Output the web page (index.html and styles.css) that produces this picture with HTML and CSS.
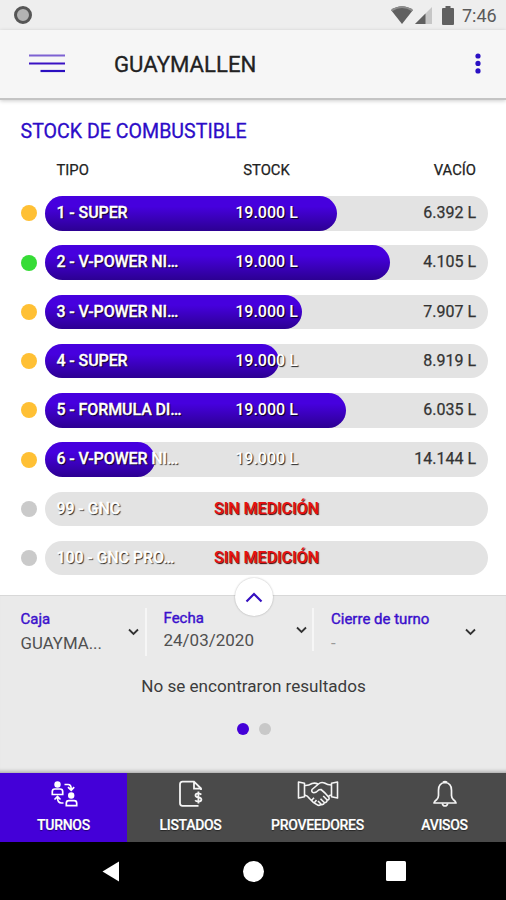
FILE: index.html
```
<!DOCTYPE html>
<html lang="es">
<head>
  <meta charset="UTF-8">
  <title>Stock de combustible</title>
  <meta name="viewport" content="width=device-width, initial-scale=1">
  <link rel="stylesheet" href="styles.css">
</head>
<body>
  <div class="status-bar">
    <span class="recorder"></span>
    <div class="status-icons">
      <svg class="wifi" width="22" height="18" viewBox="0 0 22 18"><path d="M0 4Q11-3.500 22 4L11 18Z" fill="#606060"/><path d="M0 4Q11-3.500 22 4L21 5.300Q11-1.500 1 5.300Z" fill="#8d8d8d"/></svg>
      <svg class="signal" width="17" height="17" viewBox="0 0 17 17"><path d="M17 0V17H0Z" fill="#c6c6c6"/><path d="M10.500 6.500V17H0Z" fill="#606060"/></svg>
      <svg class="battery" width="12" height="19" viewBox="0 0 12 19"><path d="M3.500 0h5v2H11a1 1 0 0 1 1 1v15a1 1 0 0 1-1 1H1a1 1 0 0 1-1-1V3a1 1 0 0 1 1-1h2.500z" fill="#606060"/></svg>
      <span class="clock">7:46</span>
    </div>
  </div>

  <header class="header">
    <svg class="menu" width="36" height="19" viewBox="0 0 36 19">
      <path d="M0 1.500h36" stroke="#7d61d2" stroke-width="2.200"/>
      <path d="M0 9.500h36" stroke="#3a12c4" stroke-width="2.200"/>
      <path d="M11.500 17h24.500" stroke="#2a0fc0" stroke-width="2.200"/>
    </svg>
    <h1>GUAYMALLEN</h1>
    <svg class="more" width="6" height="21" viewBox="0 0 6 21" fill="#2a10c4"><circle cx="3" cy="3" r="2.600"/><circle cx="3" cy="10.400" r="2.600"/><circle cx="3" cy="17.900" r="2.600"/></svg>
  </header>

  <main class="stock">
    <h2>STOCK DE COMBUSTIBLE</h2>
    <div class="cols table-head">
      <span class="tipo">TIPO</span><span class="cantidad">STOCK</span><span class="vacio">VACÍO</span>
    </div>

    <div class="tank">
      <span class="dot warn"></span>
      <div class="bar">
        <div class="fill" style="width: 292.5px"></div>
        <div class="cols"><span class="tipo">1 - SUPER</span><span class="cantidad">19.000 L</span><span class="vacio">6.392 L</span></div>
      </div>
    </div>
    <div class="tank">
      <span class="dot ok"></span>
      <div class="bar">
        <div class="fill" style="width: 345.5px"></div>
        <div class="cols"><span class="tipo">2 - V-POWER NI…</span><span class="cantidad">19.000 L</span><span class="vacio">4.105 L</span></div>
      </div>
    </div>
    <div class="tank">
      <span class="dot warn"></span>
      <div class="bar">
        <div class="fill" style="width: 257px"></div>
        <div class="cols"><span class="tipo">3 - V-POWER NI…</span><span class="cantidad">19.000 L</span><span class="vacio">7.907 L</span></div>
      </div>
    </div>
    <div class="tank">
      <span class="dot warn"></span>
      <div class="bar">
        <div class="fill" style="width: 234.5px"></div>
        <div class="cols"><span class="tipo">4 - SUPER</span><span class="cantidad">19.000 L</span><span class="vacio">8.919 L</span></div>
      </div>
    </div>
    <div class="tank">
      <span class="dot warn"></span>
      <div class="bar">
        <div class="fill" style="width: 301.5px"></div>
        <div class="cols"><span class="tipo">5 - FORMULA DI…</span><span class="cantidad">19.000 L</span><span class="vacio">6.035 L</span></div>
      </div>
    </div>
    <div class="tank">
      <span class="dot warn"></span>
      <div class="bar">
        <div class="fill" style="width: 110.5px"></div>
        <div class="cols"><span class="tipo">6 - V-POWER NI…</span><span class="cantidad">19.000 L</span><span class="vacio">14.144 L</span></div>
      </div>
    </div>
    <div class="tank">
      <span class="dot"></span>
      <div class="bar">
        <div class="cols"><span class="tipo">99 - GNC</span><span class="cantidad error">SIN MEDICIÓN</span></div>
      </div>
    </div>
    <div class="tank">
      <span class="dot"></span>
      <div class="bar">
        <div class="cols"><span class="tipo">100 - GNC PRO…</span><span class="cantidad error">SIN MEDICIÓN</span></div>
      </div>
    </div>
  </main>

  <section class="panel">
    <div class="toggle">
      <svg width="18" height="11" viewBox="0 0 18 11"><path d="M1.500 9.500L9 2l7.500 7.500" fill="none" stroke="#3510c0" stroke-width="2.200"/></svg>
    </div>
    <div class="filters">
      <div class="filter caja">
        <div><label>Caja</label><p>GUAYMA...</p></div>
        <svg class="chevron" width="11" height="8" viewBox="0 0 11 8"><path d="M1 1.500l4.500 4.500L10 1.500"/></svg>
      </div>
      <div class="filter fecha">
        <div><label>Fecha</label><p>24/03/2020</p></div>
        <svg class="chevron" width="11" height="8" viewBox="0 0 11 8"><path d="M1 1.500l4.500 4.500L10 1.500"/></svg>
      </div>
      <div class="filter cierre">
        <div><label>Cierre de turno</label><p class="empty">-</p></div>
        <svg class="chevron" width="11" height="8" viewBox="0 0 11 8"><path d="M1 1.500l4.500 4.500L10 1.500"/></svg>
      </div>
    </div>
    <p class="no-results">No se encontraron resultados</p>
    <div class="pager"><span class="active"></span><span></span></div>
  </section>

  <nav class="tabs">
    <div class="tab selected">
      <svg width="28" height="28" viewBox="0 0 28 28" fill="none" stroke="#fff" stroke-width="1.700">
        <circle cx="7.500" cy="4.500" r="3.200" fill="#fff" stroke="none"/>
        <path d="M2.300 14.500v-3q0-2.500 2.500-2.500h5.400q2.500 0 2.500 2.500v3z"/>
        <circle cx="21.200" cy="15.500" r="3.200" fill="#fff" stroke="none"/>
        <path d="M16.300 25.700v-2.500q0-2.500 2.500-2.500h5.400q2.500 0 2.500 2.500v2.500z"/>
        <path d="M14.500 4.500h3.500q3.200 0 3.200 4.500M18 7.200l3.200 3 3-3M13.500 23h-2q-4 0-4-5.500M4.500 19.500l3-3 3 3"/>
      </svg>
      <span>TURNOS</span>
    </div>
    <div class="tab">
      <svg width="28" height="28" viewBox="0 0 28 28" fill="none" stroke="#f4f4f4" stroke-width="1.800">
        <path d="M21.500 25.800H5.500q-2.500 0-2.500-2.500V4.200q0-2.500 2.500-2.500H17l7 6.800v1.500M17 1.700v7h7"/>
        <path d="M24.300 14.600q-1-1.300-3.100-1.300-2.700 0-2.700 2 0 1.800 2.900 2.100 3 .300 3 2.200 0 2-3 2-2.300 0-3.200-1.400M21.400 11.500v12"/>
      </svg>
      <span>LISTADOS</span>
    </div>
    <div class="tab">
      <svg width="42" height="28" viewBox="0 0 42 28" fill="none" stroke="#f4f4f4" stroke-width="1.600" stroke-linejoin="round">
        <path d="M1.500 2l6 1.200v13.500l-6 1.300zM40.500 2l-6 1.200v13.500l6 1.300z"/>
        <path d="M7.500 5.500q4 .300 7.500-2 3-1 6 .500M34.500 5q-4 0-7-2-3.500-1.300-6 1L15 9.500q-1 2.800 1.800 3.200 2.700-.200 5.200-2.900l2-.3q4.500 3.500 7.800 7.700 1.200 2.500-1.600 3M7.500 15q3 .500 5 3.500 4 5 8.500 6.800 2 .500 3.200-1L21 21M24.200 24.500q2.500.500 3.300-1.800l-4-4M27.500 22.700q2.500 0 2.700-2.700l-4-4M31.500 16.500q1-1.500 3-1.500M14.500 20.500l2.500-2.800M17.200 23l2.300-3"/>
      </svg>
      <span>PROVEEDORES</span>
    </div>
    <div class="tab">
      <svg width="28" height="28" viewBox="0 0 28 28" fill="none" stroke="#f4f4f4" stroke-width="1.700" stroke-linejoin="round">
        <path d="M14 2.500q-6.500.500-6.500 7.700v5.300q0 2.500-2 4.300-2 1.500-2.500 3.200h22q-.500-1.700-2.500-3.200-2-1.800-2-4.300v-5.300Q20.500 3 14 2.500z"/>
        <path d="M12 2.300q2-1.500 4 0M11.300 23.300q.500 2.700 2.700 2.700t2.700-2.700"/>
      </svg>
      <span>AVISOS</span>
    </div>
  </nav>

  <div class="android-nav">
    <svg width="18" height="21" viewBox="0 0 18 21"><path d="M17 .500v20L.500 10.500z" fill="#fff"/></svg>
    <svg width="21" height="21" viewBox="0 0 21 21"><circle cx="10.500" cy="10.500" r="10.500" fill="#fff"/></svg>
    <svg width="20" height="20" viewBox="0 0 20 20"><rect width="20" height="20" rx="1.500" fill="#fff"/></svg>
  </div>
</body>
</html>
```
FILE: styles.css
```
:root {
  --primary: #4400d8;
  --primary-dark: #2c0092;
  --track: #e3e3e3;
  --panel: #eaeaea;
}
* {
  box-sizing: border-box;
}
body {
  margin: 0;
  width: 506px;
  height: 900px;
  display: flex;
  flex-direction: column;
  overflow: hidden;
  background: #fff;
  font-family: Roboto, Arial, sans-serif;
  color: #222;
}
h1, h2, p {
  margin: 0;
  font-weight: 400;
}
svg {
  display: block;
  flex: none;
}

/* top */
.status-bar {
  height: 30px;
  flex: none;
  display: flex;
  justify-content: space-between;
  align-items: center;
  padding: 0 9px 0 14px;
  background: #eee;
}
.recorder {
  width: 18px;
  height: 18px;
  border: 3px solid #565656;
  border-radius: 50%;
  background: #b4b4b4;
}
.status-icons {
  display: flex;
  align-items: center;
}
.signal {
  margin: 1px 10px 0 2px;
}
.clock {
  width: 35px;
  margin: 2px 0 0 8px;
  font-size: 18px;
  line-height: 20px;
  color: #5a5a5a;
  white-space: nowrap;
}
.header {
  height: 70px;
  flex: none;
  display: flex;
  align-items: center;
  padding: 0 25px 2px 29px;
  background: #f6f6f6;
  border-bottom: 2px solid #c4c4c4;
  box-shadow: 0 1px 4px rgba(0, 0, 0, 0.2);
}
.header h1 {
  flex: 1;
  margin-left: 49px;
  padding-top: 1px;
  font-size: 22.2px;
  line-height: 28px;
  -webkit-text-stroke: 0.3px #222;
}

/* tank list */
.stock {
  height: 495px;
  flex: none;
  padding: 21px 18px 0 20.5px;
}
.stock h2 {
  font-size: 19.6px;
  line-height: 22px;
  color: #2c0cc8;
  -webkit-text-stroke: 0.3px #2c0cc8;
}
.cols {
  display: grid;
  grid-template-columns: 150px 120px 1fr;
  align-items: center;
  padding: 0 12px;
  white-space: nowrap;
}
.cantidad {
  text-align: center;
}
.vacio {
  text-align: right;
}
.table-head {
  height: 28px;
  margin: 13px 0 12px 24px;
  font-size: 14.8px;
  -webkit-text-stroke: 0.25px #222;
}
.tank {
  display: flex;
  align-items: center;
  gap: 8px;
  height: 34.5px;
  margin-bottom: 14.75px;
}
.dot {
  width: 16px;
  height: 16px;
  border-radius: 50%;
  background: #cacaca;
}
.dot.warn {
  background: #ffc034;
}
.dot.ok {
  background: #36dc36;
}
.bar {
  flex: 1;
  display: grid;
  height: 34.5px;
  border-radius: 18px;
  background: var(--track);
}
/* fill and texts share the same cell */
.fill, .bar .cols {
  grid-area: 1 / 1;
}
.fill {
  border-radius: 18px;
  background: linear-gradient(#4600de 30%, var(--primary-dark));
}
.bar .cols {
  padding-bottom: 1.5px;
  font-size: 16px;
}
.bar .tipo, .bar .cantidad {
  color: #fff;
  font-weight: 500;
  text-shadow: 1px 1px 1px rgba(0, 0, 0, 0.85);
}
.bar .tipo {
  letter-spacing: -0.1px;
  -webkit-text-stroke: 0.3px #fff;
}
.bar .vacio {
  -webkit-text-stroke: 0.25px #333;
  color: #333;
}
.bar .error {
  color: #e81010;
  text-shadow: 1px 1px 1px #400;
}

/* shift filters */
.panel {
  height: 178px;
  flex: none;
  position: relative;
  padding-top: 12px;
  background: var(--panel);
  border-top: 1px solid #d8d8d8;
  box-shadow: inset 0 -5px 4px -4px #999;
}
.toggle {
  position: absolute;
  top: -18px;
  left: 235px;
  width: 38px;
  height: 38px;
  border-radius: 50%;
  display: flex;
  align-items: center;
  justify-content: center;
  background: #fff;
  box-shadow: 0 0 2px rgba(0, 0, 0, 0.3);
}
.filters {
  display: flex;
  height: 48px;
}
.filter {
  display: flex;
  justify-content: space-between;
  align-items: center;
}
.caja {
  width: 147px;
  padding: 0 6px 0 20.5px;
  border-right: 2px solid #f6f6f6;
}
.fecha {
  width: 167px;
  height: 43px;
  padding: 0 5px 0 16.5px;
  border-right: 2px solid #f6f6f6;
}
.cierre {
  flex: 1;
  padding: 0 30px 0 17px;
}
.filter label {
  display: block;
  font-size: 15px;
  line-height: 20px;
  color: #3a10cc;
  -webkit-text-stroke: 0.4px #3a10cc;
}
.filter p {
  font-size: 16.8px;
  line-height: 24px;
  margin-top: 2px;
  color: #505050;
}
.filter.fecha p {
  font-size: 17px;
  margin-top: 0;
}
.filter p.empty {
  color: #999;
}
.chevron path {
  fill: none;
  stroke: #333;
  stroke-width: 1.800;
}
.no-results {
  margin-top: 19px;
  padding-left: 1px;
  text-align: center;
  font-size: 17.1px;
  line-height: 22px;
  color: #3c3c3c;
}
.pager {
  display: flex;
  justify-content: center;
  gap: 10px;
  margin-top: 26px;
  padding-left: 2px;
}
.pager span {
  width: 12px;
  height: 12px;
  border-radius: 50%;
  background: #c8c8c8;
}
.pager .active {
  background: var(--primary);
}

/* bottom */
.tabs {
  height: 69px;
  flex: none;
  display: grid;
  grid-template-columns: repeat(4, 127px);
  background: #4a4a4a;
}
.tab {
  display: flex;
  flex-direction: column;
  align-items: center;
  padding-top: 7px;
  color: #fff;
  font-size: 14px;
  font-weight: 500;
  line-height: 18px;
  letter-spacing: -0.3px;
  -webkit-text-stroke: 0.2px #fff;
  text-shadow: 0 1px 1px rgba(0, 0, 0, 0.5);
}
.tab span {
  margin-top: 8px;
}
.tab.selected {
  background: var(--primary);
}
.android-nav {
  flex: 1;
  display: flex;
  justify-content: space-between;
  align-items: center;
  padding: 0 100px 0 102px;
  background: #000;
}
```
